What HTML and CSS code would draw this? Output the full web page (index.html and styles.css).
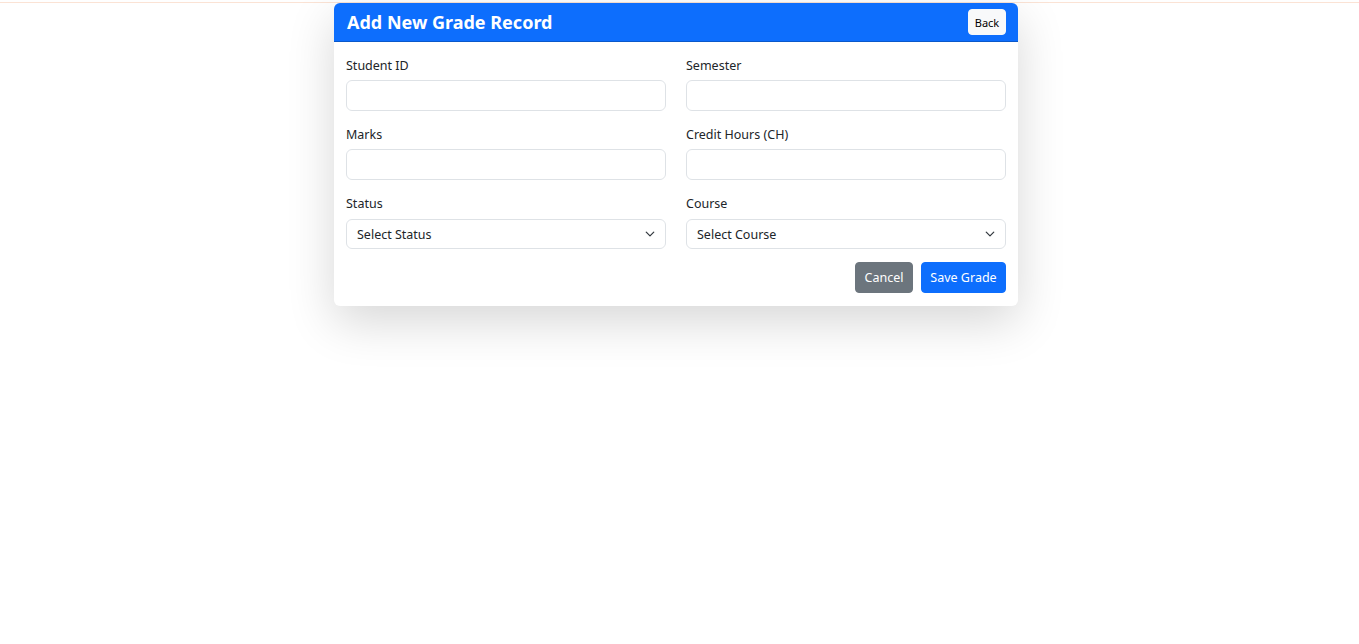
FILE: index.html
```html
<!DOCTYPE html>
<html lang="en">
<head>
<meta charset="utf-8">
<title>Add New Grade Record</title>
<link rel="stylesheet" href="styles.css">
</head>
<body>
<div class="topline"></div>
<div class="page">
  <div class="card">
    <div class="card-header">
      <h1 class="title">Add New Grade Record</h1>
      <button class="btn-back" type="button">Back</button>
    </div>
    <form class="card-body">
      <div class="grid">
        <div class="field">
          <label class="label">Student ID</label>
          <input class="control" type="text">
        </div>
        <div class="field">
          <label class="label">Semester</label>
          <input class="control" type="text">
        </div>
        <div class="field">
          <label class="label">Marks</label>
          <input class="control" type="text">
        </div>
        <div class="field">
          <label class="label">Credit Hours (CH)</label>
          <input class="control" type="text">
        </div>
        <div class="field">
          <label class="label">Status</label>
          <div class="select">
            <span>Select Status</span>
            <svg class="chev" viewBox="0 0 16 16" width="16" height="12"><path d="m2 5 6 6 6-6" fill="none" stroke="#343a40" stroke-width="2" stroke-linecap="round" stroke-linejoin="round"/></svg>
          </div>
        </div>
        <div class="field">
          <label class="label">Course</label>
          <div class="select">
            <span>Select Course</span>
            <svg class="chev" viewBox="0 0 16 16" width="16" height="12"><path d="m2 5 6 6 6-6" fill="none" stroke="#343a40" stroke-width="2" stroke-linecap="round" stroke-linejoin="round"/></svg>
          </div>
        </div>
      </div>
      <div class="actions">
        <button class="btn btn-secondary" type="button">Cancel</button>
        <button class="btn btn-primary" type="button">Save Grade</button>
      </div>
    </form>
  </div>
</div>
</body>
</html>
```

FILE: styles.css
```css
* { box-sizing: border-box; }
html, body { margin: 0; padding: 0; background: #fff; }
body {
  font-family: "Noto Sans", "Open Sans", "Liberation Sans", sans-serif;
  color: #212529;
  font-size: 12.5px;
  min-height: 644px;
}
.topline {
  margin-top: 2px;
  height: 1px;
  background: #fbe3d5;
}
.page {
  display: flex;
  justify-content: center;
  padding: 0 7px 80px 0;
}
.card {
  width: 684px;
  background: #fff;
  border-radius: 6px;
  box-shadow: 0 16px 48px rgba(0,0,0,0.16);
  overflow: hidden;
}
.card-header {
  background: #0d6efd;
  height: 39px;
  padding: 0 12px 0 13px;
  display: flex;
  align-items: center;
  justify-content: space-between;
  border-bottom: 1px solid #0a58ca;
}
.title {
  margin: 0;
  color: #fff;
  font-size: 18px;
  font-weight: 700;
  line-height: 24px;
}
.btn-back {
  font-family: inherit;
  font-size: 11px;
  background: #f8f9fa;
  color: #000;
  border: 1px solid #f8f9fa;
  border-radius: 4px;
  height: 26px;
  width: 38px;
  padding: 0;
  margin-top: 0;
}
.card-body {
  padding: 12px 12px 13px;
}
.grid {
  display: grid;
  grid-template-columns: 1fr 1fr;
  column-gap: 20px;
  row-gap: 12px;
}
.field {
  display: flex;
  flex-direction: column;
}
.label {
  line-height: 21px;
  padding-top: 1px;
  margin-bottom: 4px;
}
.control, .select {
  height: 31px;
  border: 1px solid #dee2e6;
  border-radius: 6px;
  background: #fff;
  font-family: inherit;
  font-size: 12.5px;
}
.select {
  display: flex;
  align-items: center;
  justify-content: space-between;
  padding: 0 8px 0 10px;
  height: 30px;
  margin-top: 1px;
}
.chev { display: block; width: 14px; height: 10px; }
.actions {
  display: flex;
  justify-content: flex-end;
  gap: 8px;
  margin-top: 13px;
}
.btn {
  font-family: inherit;
  font-size: 12.5px;
  height: 31px;
  padding: 0 10px;
  border-radius: 4px;
  color: #fff;
  border: 1px solid transparent;
}
.btn-secondary { background: #6c757d; border-color: #6c757d; width: 58px; padding: 0; }
.btn-primary { background: #0d6efd; border-color: #0d6efd; width: 85px; padding: 0; }
```
